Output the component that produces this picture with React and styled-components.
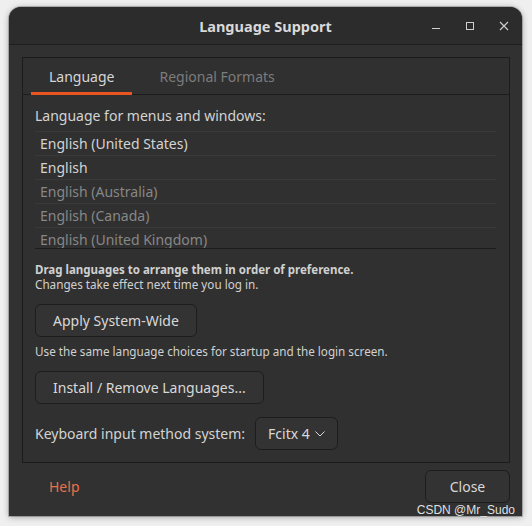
import React from 'react';
import styled, { createGlobalStyle } from 'styled-components';

const Global = createGlobalStyle`
  html, body { margin: 0; padding: 0; background: #efefef; }
  body { font-family: "Noto Sans", "DejaVu Sans", sans-serif; }
  * { box-sizing: border-box; }
`;

const Screen = styled.div`
  position: relative;
  width: 532px;
  height: 526px;
  padding: 7px 10px 10px 9px;
  background: #efefef;
  overflow: hidden;
`;

const Window = styled.div`
  height: 509px;
  display: flex;
  flex-direction: column;
  background: #313131;
  border-radius: 12px 12px 0 0;
  box-shadow: 0 1px 6px rgba(0, 0, 0, 0.35), 0 0 0 1px rgba(0, 0, 0, 0.2);
  overflow: hidden;
`;

const TitleBar = styled.div`
  height: 38px;
  flex: none;
  display: grid;
  grid-template-columns: 1fr auto 1fr;
  align-items: center;
  background: #2c2c2c;
  border-bottom: 1px solid #1e1e1e;
`;

const Title = styled.div`
  grid-column: 2;
  font-weight: 700;
  font-size: 14.5px;
  color: #d9d9d9;
`;

const Controls = styled.div`
  justify-self: end;
  display: flex;
  gap: 10px;
  padding-right: 6px;
`;

const Control = styled.div`
  width: 24px;
  height: 24px;
  display: flex;
  align-items: center;
  justify-content: center;
  color: #cfcfcf;
`;

const Content = styled.div`
  padding: 12px 12px 0 13px;
`;

const Frame = styled.div`
  height: 406px;
  display: flex;
  flex-direction: column;
  border: 1px solid #1c1c1c;
  background: #303030;
`;

const TabBar = styled.div`
  height: 37px;
  flex: none;
  display: flex;
  gap: 9px;
  padding-left: 8px;
  border-bottom: 1px solid #1c1c1c;
`;

const Tab = styled.div`
  display: flex;
  align-items: center;
  padding: 2px 18px 0;
  margin-bottom: -1px;
  font-size: 14px;
  color: ${p => (p.$active ? '#d6d6d6' : '#7c7c7c')};
  border-bottom: 3px solid ${p => (p.$active ? '#e95420' : 'transparent')};
`;

const Panel = styled.div`
  display: flex;
  flex-direction: column;
  align-items: flex-start;
  padding: 11px 13px 0 12px;
`;

const Label = styled.div`
  font-size: 14px;
  line-height: 20px;
  color: #d3d3d3;
`;

const List = styled.div`
  align-self: stretch;
  margin-top: 5px;
  height: 118px;
  overflow: hidden;
  border-top: 1px solid #3a3a3a;
  border-bottom: 1px solid #1c1c1c;
`;

const Row = styled.div`
  height: 24px;
  display: flex;
  align-items: center;
  padding-left: 5px;
  font-size: 14px;
  color: ${p => (p.$dim ? '#878787' : '#d3d3d3')};
  border-bottom: 1px solid #393939;
`;

const Hint = styled.div`
  margin-top: ${p => p.$mt || 0}px;
  font-size: ${p => (p.$bold ? 11.5 : 11.7)}px;
  line-height: 15px;
  font-weight: ${p => (p.$bold ? 700 : 400)};
  color: #d0d0d0;
`;

const Button = styled.button`
  margin-top: ${p => p.$mt || 0}px;
  height: 33px;
  padding: 0 17px;
  font-family: inherit;
  font-size: 14px;
  color: #d8d8d8;
  background: #333333;
  border: 1px solid #1d1d1d;
  border-radius: 6px;
`;

const InputRow = styled.div`
  margin-top: 13px;
  display: flex;
  align-items: center;
  gap: 10px;
`;

const Dropdown = styled.div`
  height: 33px;
  display: flex;
  align-items: center;
  gap: 5px;
  padding: 0 12px;
  font-size: 14px;
  color: #d8d8d8;
  background: #333333;
  border: 1px solid #1d1d1d;
  border-radius: 6px;
`;

const Footer = styled.div`
  flex: 1;
  display: flex;
  justify-content: space-between;
  align-items: flex-start;
  padding: 7px 12px 0 26px;
`;

const FlatButton = styled.button`
  height: 33px;
  padding: 0 14px;
  font-family: inherit;
  font-size: 14px;
  color: #e8714c;
  background: transparent;
  border: none;
`;

const CloseButton = styled(Button)`
  width: 85px;
  padding: 0;
`;

const Watermark = styled.div`
  position: absolute;
  right: 17px;
  top: 502px;
  font-family: "Liberation Sans", Arial, sans-serif;
  font-size: 12px;
  line-height: 16px;
  color: #e2e2e2;
  text-shadow: 0 0 1px rgba(0, 0, 0, 0.4);
`;

const langs = [
  ['English (United States)', false],
  ['English', false],
  ['English (Australia)', true],
  ['English (Canada)', true],
  ['English (United Kingdom)', true],
];

export default function App() {
  return (
    <>
      <Global />
      <Screen>
        <Window>
          <TitleBar>
            <Title>Language Support</Title>
            <Controls>
              <Control>
                <svg width="10" height="10" viewBox="0 0 10 10">
                  <line x1="1" y1="7.5" x2="9" y2="7.5" stroke="currentColor" strokeWidth="1" />
                </svg>
              </Control>
              <Control>
                <svg width="10" height="10" viewBox="0 0 10 10">
                  <rect x="1.5" y="1.5" width="7" height="7" fill="none" stroke="currentColor" strokeWidth="1" />
                </svg>
              </Control>
              <Control>
                <svg width="10" height="10" viewBox="0 0 10 10">
                  <path d="M1 1 L9 9 M9 1 L1 9" stroke="currentColor" strokeWidth="1.1" />
                </svg>
              </Control>
            </Controls>
          </TitleBar>
          <Content>
            <Frame>
              <TabBar>
                <Tab $active>Language</Tab>
                <Tab>Regional Formats</Tab>
              </TabBar>
              <Panel>
                <Label>Language for menus and windows:</Label>
                <List>
                  {langs.map(([name, dim]) => (
                    <Row key={name} $dim={dim}>{name}</Row>
                  ))}
                </List>
                <Hint $mt={13} $bold>Drag languages to arrange them in order of preference.</Hint>
                <Hint>Changes take effect next time you log in.</Hint>
                <Button $mt={12}>Apply System-Wide</Button>
                <Hint $mt={7}>Use the same language choices for startup and the login screen.</Hint>
                <Button $mt={12}>Install / Remove Languages...</Button>
                <InputRow>
                  <Label>Keyboard input method system:</Label>
                  <Dropdown>
                    Fcitx 4
                    <svg width="10" height="6" viewBox="0 0 10 6">
                      <polyline points="0.5,0.5 5,5 9.5,0.5" fill="none" stroke="currentColor" strokeWidth="1" />
                    </svg>
                  </Dropdown>
                </InputRow>
              </Panel>
            </Frame>
          </Content>
          <Footer>
            <FlatButton>Help</FlatButton>
            <CloseButton>Close</CloseButton>
          </Footer>
        </Window>
        <Watermark>CSDN @Mr_Sudo</Watermark>
      </Screen>
    </>
  );
}
